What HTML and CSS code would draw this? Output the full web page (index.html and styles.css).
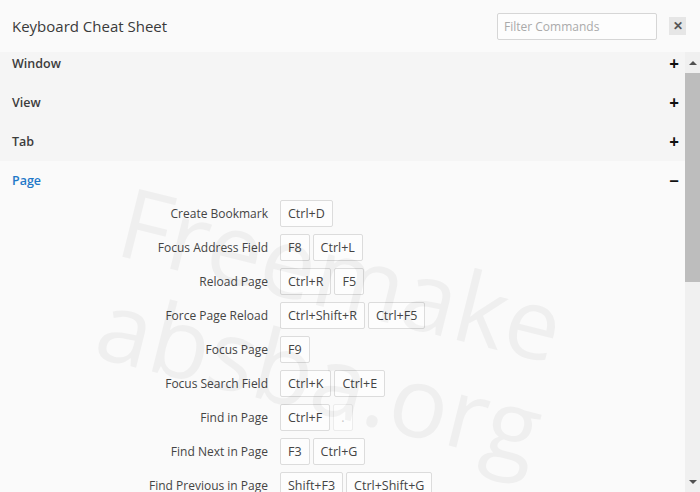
FILE: index.html
```html
<!DOCTYPE html>
<html lang="en">
<head>
  <meta charset="UTF-8">
  <title>Keyboard Cheat Sheet</title>
  <link rel="stylesheet" href="styles.css">
</head>
<body>
  <div class="header">
    <h1 class="title">Keyboard Cheat Sheet</h1>
    <input class="filter" type="text" placeholder="Filter Commands">
    <button class="close">&#x2715;</button>
  </div>

  <div class="main">
    <div class="list">
      <div class="section collapsed">
        <span>Window</span><span class="toggle">+</span>
      </div>
      <div class="section collapsed">
        <span>View</span><span class="toggle">+</span>
      </div>
      <div class="section collapsed">
        <span>Tab</span><span class="toggle">+</span>
      </div>
      <div class="section open">
        <span>Page</span><span class="toggle">&minus;</span>
      </div>

      <div class="commands">
        <div class="label">Create Bookmark</div>
        <div class="keys"><span class="key">Ctrl+D</span></div>

        <div class="label">Focus Address Field</div>
        <div class="keys"><span class="key">F8</span><span class="key">Ctrl+L</span></div>

        <div class="label">Reload Page</div>
        <div class="keys"><span class="key">Ctrl+R</span><span class="key">F5</span></div>

        <div class="label">Force Page Reload</div>
        <div class="keys"><span class="key">Ctrl+Shift+R</span><span class="key">Ctrl+F5</span></div>

        <div class="label">Focus Page</div>
        <div class="keys"><span class="key">F9</span></div>

        <div class="label">Focus Search Field</div>
        <div class="keys"><span class="key">Ctrl+K</span><span class="key">Ctrl+E</span></div>

        <div class="label">Find in Page</div>
        <div class="keys"><span class="key">Ctrl+F</span><span class="key faded">.</span></div>

        <div class="label">Find Next in Page</div>
        <div class="keys"><span class="key">F3</span><span class="key">Ctrl+G</span></div>

        <div class="label">Find Previous in Page</div>
        <div class="keys"><span class="key">Shift+F3</span><span class="key">Ctrl+Shift+G</span></div>
      </div>

      <div class="watermark wm1">Freemake</div>
      <div class="watermark wm2">absba.org</div>
    </div>

    <div class="scrollbar">
      <div class="arrow up"></div>
      <div class="thumb"></div>
      <div class="track"></div>
      <div class="arrow down"></div>
    </div>
  </div>
</body>
</html>
```

FILE: styles.css
```css
html, body {
  margin: 0;
  padding: 0;
  height: 100%;
}

body {
  font-family: 'Open Sans', 'Liberation Sans', sans-serif;
  background: #fafafa;
  color: #333;
  overflow: hidden;
}

.header {
  position: relative;
  z-index: 2;
  display: flex;
  align-items: center;
  height: 52px;
  padding: 0 14px 0 12px;
  background: #fafafa;
}

.title {
  flex: 1;
  margin: 0;
  font-size: 15px;
  font-weight: 400;
  color: #3a3a3a;
}

.filter {
  width: 160px;
  height: 27px;
  box-sizing: border-box;
  margin-right: 12px;
  padding: 0 6px;
  border: 1px solid #d6d6d6;
  border-radius: 2px;
  background: #fdfdfd;
  font-family: inherit;
  font-size: 12px;
  color: #333;
}

.filter::placeholder {
  color: #aaa;
}

.close {
  width: 17px;
  height: 18px;
  padding: 0;
  border: none;
  background: #e6e6e6;
  color: #555;
  font-size: 12px;
  font-weight: 700;
  line-height: 18px;
}

.main {
  display: flex;
  height: 440px;
}

.list {
  position: relative;
  flex: 1;
  margin-top: -8px;
  overflow: hidden;
}

.section {
  display: flex;
  justify-content: space-between;
  align-items: center;
  height: 39px;
  padding: 0 6px 0 12px;
  font-size: 12.5px;
  font-weight: 600;
}

.section.collapsed {
  background: #f5f5f5;
  color: #3c3c3c;
}

.section.open {
  color: #1f78c8;
}

.toggle {
  width: 10px;
  text-align: center;
  font-size: 17px;
  font-weight: 700;
  color: #111;
}

.commands {
  display: grid;
  grid-template-columns: 256px auto;
  column-gap: 12px;
  row-gap: 7px;
  padding-left: 12px;
}

.label {
  display: flex;
  align-items: center;
  justify-content: flex-end;
  font-size: 12px;
  color: #444;
}

.keys {
  display: flex;
  gap: 3px;
}

.key {
  height: 27px;
  box-sizing: border-box;
  padding: 0 7px;
  border: 1px solid #dcdcdc;
  border-radius: 2px;
  background: #fdfdfd;
  font-size: 12.5px;
  line-height: 25px;
  color: #444;
}

.key.faded {
  border-color: #ececec;
  color: #c8c8c8;
}

.watermark {
  position: absolute;
  z-index: 1;
  font-size: 98px;
  line-height: 1;
  color: rgba(0, 0, 0, 0.045);
  white-space: nowrap;
  pointer-events: none;
  transform-origin: 0 0;
  transform: rotate(14deg);
}

.wm1 {
  left: 134px;
  top: 126px;
}

.wm2 {
  left: 112px;
  top: 228px;
}

.scrollbar {
  display: flex;
  flex-direction: column;
  width: 15px;
  background: #f0f0f0;
}

.arrow {
  height: 21px;
  display: flex;
  align-items: center;
  justify-content: center;
}

.arrow::before {
  content: "";
  border-left: 4px solid transparent;
  border-right: 4px solid transparent;
}

.arrow.up::before {
  border-bottom: 4px solid #505050;
}

.arrow.down::before {
  border-top: 4px solid #505050;
}

.thumb {
  height: 209px;
  background: #bdbdbd;
}

.track {
  flex: 1;
}
```
